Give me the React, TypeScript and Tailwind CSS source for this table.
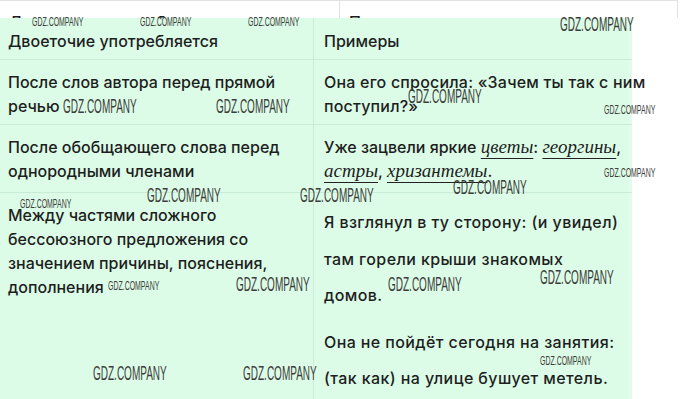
const marks: { x: number; y: number; big: boolean }[] = [
  { x: 32, y: 18, big: false },
  { x: 140, y: 18, big: false },
  { x: 248, y: 18, big: false },
  { x: 604, y: 106, big: false },
  { x: 604, y: 169, big: false },
  { x: 20, y: 200, big: false },
  { x: 108, y: 282, big: false },
  { x: 540, y: 357, big: false },
  { x: 560, y: 17, big: true },
  { x: 63, y: 99, big: true },
  { x: 216, y: 99, big: true },
  { x: 408, y: 89, big: true },
  { x: 147, y: 188, big: true },
  { x: 300, y: 188, big: true },
  { x: 453, y: 180, big: true },
  { x: 236, y: 277, big: true },
  { x: 388, y: 277, big: true },
  { x: 540, y: 270, big: true },
  { x: 93, y: 366, big: true },
  { x: 243, y: 366, big: true },
];

const Watermark = ({ x, y, big }: { x: number; y: number; big: boolean }) => (
  <span
    className={
      big
        ? "absolute text-[20px] leading-none font-normal text-[#3c3c3c] origin-top-left scale-x-[0.5] whitespace-nowrap pointer-events-none"
        : "absolute text-[12px] leading-none font-normal text-[#3c3c3c] origin-top-left scale-x-[0.58] whitespace-nowrap pointer-events-none"
    }
    style={{ left: x, top: big ? y - 3 : y - 2, fontFamily: "'Liberation Sans', sans-serif" }}
  >
    GDZ.COMPANY
  </span>
);

const Word = ({ children }: { children: React.ReactNode }) => (
  <span className="font-['Liberation_Serif',serif] italic text-[19px] font-normal underline decoration-1 underline-offset-[5px] decoration-[#222]">
    {children}
  </span>
);

export default function App() {
  return (
    <div className="relative w-[680px] h-[399px] overflow-hidden bg-white font-['Inter',sans-serif] text-[16px] font-medium text-[#1e1e1e] whitespace-nowrap">
      {/* table behind, only its top strip shows */}
      <div className="flex h-[18px] w-[678px] overflow-hidden border-t border-r border-[#e2e2e2]">
        <div className="w-[340px] border-r border-[#e2e2e2] pl-[9px] pt-[9px] leading-6">Двоеточие употребляется</div>
        <div className="flex-1 pl-[9px] pt-[9px] leading-6">Примеры</div>
      </div>

      <div className="grid w-[632px] grid-cols-[314px_318px] bg-[#dcfce7] border-r-4 border-[#e2fbeb]">
        <div className="h-[42px] border-b border-r border-[#c9ecd6] pl-[8px] pt-[11px] leading-6">Двоеточие употребляется</div>
        <div className="h-[42px] border-b border-[#c9ecd6] pl-[10px] pt-[11px] leading-6">Примеры</div>

        <div className="h-[65px] border-b border-r border-[#c9ecd6] pl-[8px] pt-[10px] leading-6">
          После слов автора перед прямой
          <br />
          речью
        </div>
        <div className="h-[65px] border-b border-[#c9ecd6] pl-[10px] pt-[10px] leading-6 tracking-[0.2px]">
          Она его спросила: «Зачем ты так с ним
          <br />
          поступил?»
        </div>

        <div className="h-[68px] border-b border-r border-[#c9ecd6] pl-[8px] pt-[10px] leading-6">
          После обобщающего слова перед
          <br />
          однородными членами
        </div>
        <div className="h-[68px] border-b border-[#c9ecd6] pl-[10px] pt-[10px] leading-6">
          Уже зацвели яркие <Word>цветы</Word>: <Word>георгины</Word>,
          <br />
          <Word>астры</Word>, <Word>хризантемы</Word>.
        </div>

        <div className="h-[206px] border-r border-[#c9ecd6] pl-[8px] pt-[10px] leading-6">
          Между частями сложного
          <br />
          бессоюзного предложения со
          <br />
          значением причины, пояснения,
          <br />
          дополнения
        </div>
        <div className="h-[206px] pl-[10px] pt-[11px] leading-[36.5px] tracking-[0.4px]">
          <p>
            Я взглянул в ту сторону: (и увидел)
            <br />
            там горели крыши знакомых
            <br />
            домов.
          </p>
          <p className="mt-[10px]">
            Она не пойдёт сегодня на занятия:
            <br />
            (так как) на улице бушует метель.
          </p>
        </div>
      </div>

      {marks.map((m, i) => (
        <Watermark key={i} {...m} />
      ))}
    </div>
  );
}
